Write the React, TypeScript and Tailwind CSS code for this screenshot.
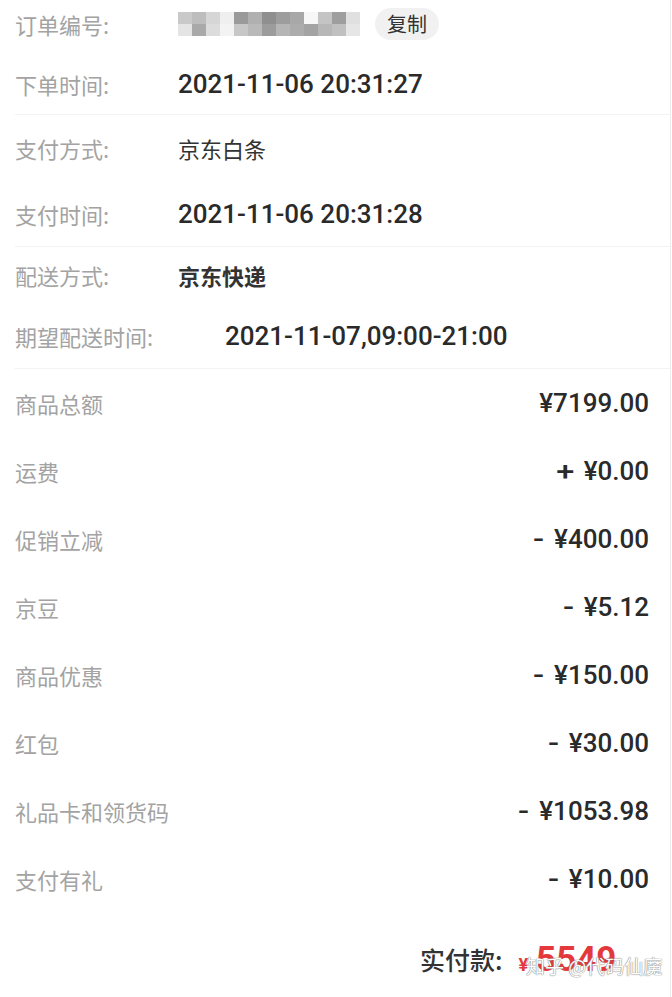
const cjk = "font-['Noto_Sans_CJK_SC',sans-serif]";
const num = "font-['Roboto','Noto_Sans_CJK_SC',sans-serif]";

const pixelRows = [
  ["#c9c9c9", "#bdbdbd", "#d6d6d6", "#efefef", "#9a9a9a", "#b0b0b0", "#8f8f8f", "#9d9d9d", "#a8a8a8", "#f7f7f7", "#c4c4c4", "#9e9e9e", "#e0e0e0"],
  ["#e4e4e4", "#a9a9a9", "#dcdcdc", "#f3f3f3", "#c7c7c7", "#b9b9b9", "#9c9c9c", "#b5b5b5", "#acacac", "#a3a3a3", "#b7b7b7", "#c0c0c0", "#e6e6e6"],
];

const infoRows = [
  { label: "支付方式:", value: "京东白条", kind: "text" },
  { label: "支付时间:", value: "2021-11-06 20:31:28", kind: "num" },
];

const priceRows = [
  { label: "商品总额", sign: "", value: "¥7199.00" },
  { label: "运费", sign: "+", value: "¥0.00" },
  { label: "促销立减", sign: "-", value: "¥400.00" },
  { label: "京豆", sign: "-", value: "¥5.12" },
  { label: "商品优惠", sign: "-", value: "¥150.00" },
  { label: "红包", sign: "-", value: "¥30.00" },
  { label: "礼品卡和领货码", sign: "-", value: "¥1053.98" },
  { label: "支付有礼", sign: "-", value: "¥10.00" },
];

const Label = ({ children, w = "w-[163px]" }: { children: React.ReactNode; w?: string }) => (
  <span className={`${w} shrink-0 text-[22px] text-[#a3a3a3] ${cjk}`}>{children}</span>
);

export default function App() {
  return (
    <div className="w-[672px] h-[997px] overflow-hidden bg-white">
      <div className="w-[671px] h-full border-r border-[#ececec] pl-[15px]">
        <div className="h-[48px] flex items-center">
          <Label>订单编号:</Label>
          <div className="flex flex-col w-[182px] h-[24px] overflow-hidden">
            {pixelRows.map((row, i) => (
              <div key={i} className="flex">
                {row.map((c, j) => (
                  <div key={j} className="w-[14px] h-[12px]" style={{ backgroundColor: c }} />
                ))}
              </div>
            ))}
          </div>
          <span className={`ml-[15px] h-[32px] px-[12px] rounded-full bg-[#f1f1f1] flex items-center text-[20px] text-[#333] ${cjk}`}>
            复制
          </span>
        </div>

        <div className="h-[67px] pt-[7px] flex items-center border-b border-[#f3f3f3]">
          <Label>下单时间:</Label>
          <span className={`text-[26px] font-medium text-[#2a2a2a] ${num}`}>2021-11-06 20:31:27</span>
        </div>

        {infoRows.map((r, i) => (
          <div key={r.label} className={`${i === 0 ? "h-[67px]" : "h-[64px]"} flex items-center`}>
            <Label>{r.label}</Label>
            {r.kind === "num" ? (
              <span className={`text-[26px] font-medium text-[#2a2a2a] ${num}`}>{r.value}</span>
            ) : (
              <span className={`text-[22px] text-[#333] ${cjk}`}>{r.value}</span>
            )}
          </div>
        ))}

        <div className="border-t border-[#f3f3f3]">
          <div className="h-[57px] flex items-center">
            <Label>配送方式:</Label>
            <span className={`text-[22px] font-bold text-[#333] ${cjk}`}>京东快递</span>
          </div>
          <div className="h-[65px] flex items-center border-b border-[#f3f3f3]">
            <Label w="w-[210px]">期望配送时间:</Label>
            <span className={`text-[26px] font-medium text-[#2a2a2a] ${num}`}>2021-11-07,09:00-21:00</span>
          </div>
        </div>

        <div className="pr-[21px]">
          {priceRows.map((r) => (
            <div key={r.label} className="h-[68px] flex items-center justify-between">
              <Label w="">{r.label}</Label>
              <span className={`flex items-center text-[26px] font-medium text-[#2a2a2a] ${num}`}>
                {r.sign && <span className="mr-[11px] scale-x-125">{r.sign}</span>}
                {r.value}
              </span>
            </div>
          ))}
        </div>

        <div className="relative h-[80px] flex items-center pl-[405px] pt-[14px]">
          <span className={`text-[25px] font-medium text-[#333] ${cjk}`}>实付款:</span>
          <span className={`ml-[16px] flex items-baseline font-bold text-[#e4393c] ${num}`}>
            <span className="text-[18px]">¥</span>
            <span className="ml-[8px] text-[35px] leading-[40px]">5549</span>
          </span>
          <span
            className={`absolute left-[511px] top-[38px] whitespace-nowrap text-[19px] leading-[30px] text-white ${cjk}`}
            style={{ textShadow: "0 0 1px #777, 0 0 1px #777" }}
          >
            知乎 @代码仙魔
          </span>
        </div>
      </div>
    </div>
  );
}
